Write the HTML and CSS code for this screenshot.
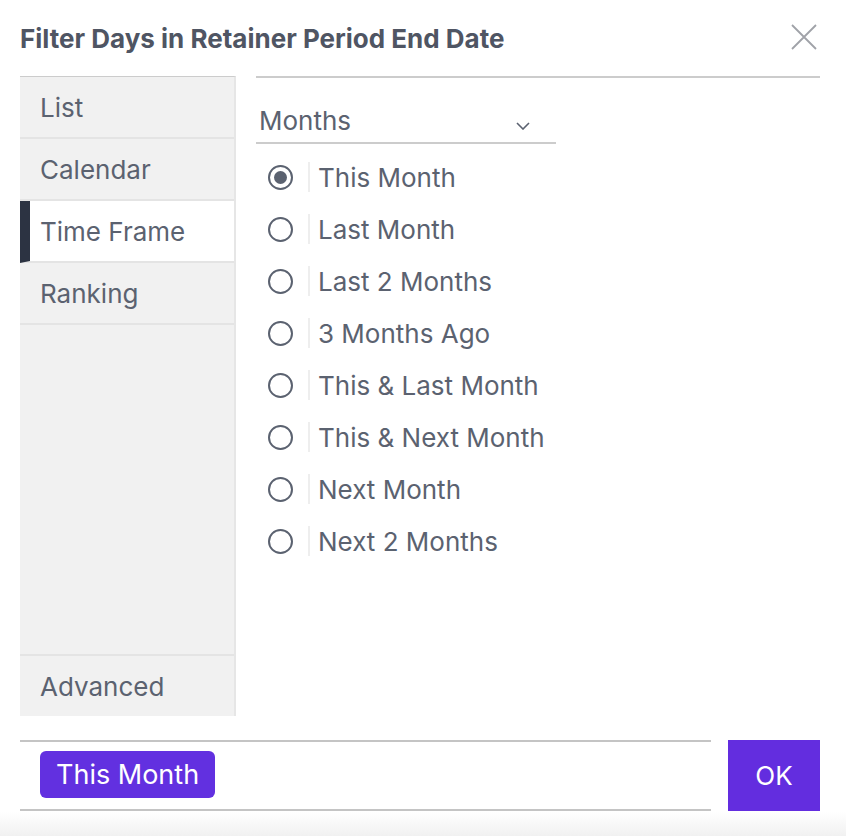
FILE: index.html
```html
<!DOCTYPE html>
<html lang="en">
<head>
    <meta charset="UTF-8">
    <meta name="viewport" content="width=device-width, initial-scale=1.0">
    <title>Filter Days in Retainer Period End Date</title>
    <link rel="stylesheet" href="styles.css">
</head>
<body>
    <div class="dialog">
        <header class="dialog-header">
            <h1>Filter Days in Retainer Period End Date</h1>
            <button class="close" aria-label="Close">
                <svg width="26" height="26" viewBox="0 0 26 26"><path d="M1 1L25 25M25 1L1 25" stroke="#a0a2a8" stroke-width="1.8" fill="none"/></svg>
            </button>
        </header>

        <div class="dialog-body">
            <ul class="tabs">
                <li>List</li>
                <li>Calendar</li>
                <li class="active">Time Frame</li>
                <li>Ranking</li>
                <li class="spacer"></li>
                <li class="last">Advanced</li>
            </ul>

            <div class="panel">
                <div class="select">
                    <span>Months</span>
                    <svg width="14" height="8" viewBox="0 0 14 8"><path d="M1 1L7 7L13 1" stroke="#5b6270" stroke-width="1.6" fill="none"/></svg>
                </div>
                <ul class="options">
                    <li class="checked"><span class="radio"></span><span class="sep"></span>This Month</li>
                    <li><span class="radio"></span><span class="sep"></span>Last Month</li>
                    <li><span class="radio"></span><span class="sep"></span>Last 2 Months</li>
                    <li><span class="radio"></span><span class="sep"></span>3 Months Ago</li>
                    <li><span class="radio"></span><span class="sep"></span>This &amp; Last Month</li>
                    <li><span class="radio"></span><span class="sep"></span>This &amp; Next Month</li>
                    <li><span class="radio"></span><span class="sep"></span>Next Month</li>
                    <li><span class="radio"></span><span class="sep"></span>Next 2 Months</li>
                </ul>
            </div>
        </div>

        <footer class="dialog-footer">
            <div class="selected">
                <span class="chip">This Month</span>
            </div>
            <button class="ok">OK</button>
        </footer>
    </div>
</body>
</html>
```

FILE: styles.css
```css
html, body {
    margin: 0;
    padding: 0;
}

body {
    font-family: 'Inter', 'Noto Sans', sans-serif;
    color: #5b6270;
    min-height: 836px;
    background: linear-gradient(to bottom, #ffffff 812px, #f1f1f1 836px);
}

.dialog {
    padding: 0 26px 0 20px;
}

.dialog-header {
    display: flex;
    align-items: center;
    justify-content: space-between;
    height: 76px;
}

.dialog-header h1 {
    margin: 0;
    font-size: 26px;
    font-weight: 700;
    color: #4f5563;
}

.close {
    border: none;
    background: none;
    padding: 0;
    margin-right: 3px;
    margin-top: -2px;
    display: flex;
}

.dialog-body {
    display: flex;
    gap: 20px;
}

.tabs {
    list-style: none;
    margin: 0;
    padding: 0;
    width: 214px;
    height: 639px;
    display: flex;
    flex-direction: column;
    background-color: #f1f1f1;
    border-top: 1px solid #cccccc;
    border-right: 2px solid #e6e6e6;
}

.tabs li {
    height: 60px;
    display: flex;
    align-items: center;
    padding-left: 20px;
    font-size: 26px;
    border-bottom: 2px solid #e4e4e4;
}

.tabs li.active {
    background-color: #ffffff;
    padding-left: 10px;
    border-left: 10px solid #2c3342;
}

.tabs li.spacer {
    flex: 1;
    height: auto;
}

.tabs li.last {
    border-bottom: none;
}

.panel {
    flex: 1;
    border-top: 2px solid #cccccc;
    padding-top: 20px;
}

.select {
    width: 297px;
    height: 44px;
    padding-left: 3px;
    display: flex;
    align-items: center;
    justify-content: space-between;
    font-size: 26px;
    border-bottom: 2px solid #cccccc;
}

.select svg {
    margin-right: 26px;
    margin-top: 12px;
}

.options {
    list-style: none;
    margin: 7px 0 0 0;
    padding: 0;
}

.options li {
    height: 52px;
    display: flex;
    align-items: center;
    font-size: 26px;
    padding-left: 12px;
}

.radio {
    width: 21px;
    height: 21px;
    border: 2px solid #5b6270;
    border-radius: 50%;
    position: relative;
    margin-right: 15px;
}

.checked .radio::after {
    content: "";
    position: absolute;
    left: 4px;
    top: 4px;
    width: 13px;
    height: 13px;
    border-radius: 50%;
    background-color: #5b6270;
}

.sep {
    width: 2px;
    height: 30px;
    background-color: #eeeeee;
    margin-right: 8px;
}

.dialog-footer {
    display: flex;
    gap: 17px;
    margin-top: 24px;
}

.selected {
    flex: 1;
    height: 67px;
    border-top: 2px solid #c4c4c4;
    border-bottom: 2px solid #c4c4c4;
    display: flex;
    align-items: center;
    padding-left: 20px;
}

.chip {
    background-color: #6230e0;
    color: #ffffff;
    font-size: 27px;
    border-radius: 6px;
    height: 47px;
    padding: 0 16px;
    display: flex;
    align-items: center;
    margin-top: -2px;
}

.ok {
    width: 92px;
    height: 71px;
    border: none;
    background-color: #632ddf;
    color: #ffffff;
    font-family: 'Inter', 'Noto Sans', sans-serif;
    font-size: 26px;
    cursor: pointer;
}
```
